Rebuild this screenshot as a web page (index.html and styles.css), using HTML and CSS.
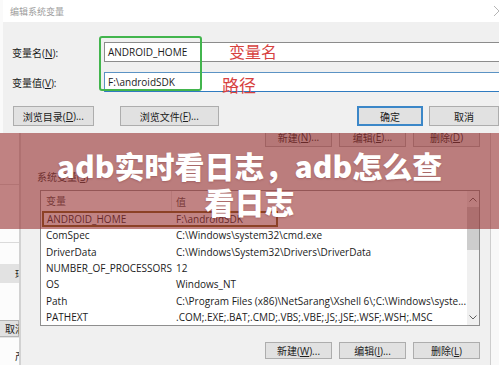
FILE: index.html
```html
<!DOCTYPE html>
<html lang="zh-CN">
<head>
<meta charset="utf-8">
<title>adb实时看日志</title>
<link rel="stylesheet" href="styles.css">
</head>
<body>
<div class="page">
  <section class="edit-dlg">
    <div class="titlebar">
      <span class="title">编辑系统变量</span>
      <svg class="close" width="12" height="12" viewBox="0 0 12 12"><path d="M1 1 L11 11 M11 1 L1 11" stroke="#b5b5b5" stroke-width="1" fill="none"/></svg>
    </div>
    <div class="dlg-body">
      <div class="field"><span class="label">变量名(<u>N</u>):</span><div class="input">ANDROID_HOME</div></div>
      <div class="field"><span class="label">变量值(<u>V</u>):</span><div class="input focus">F:\androidSDK</div></div>
      <div class="btn-row">
        <span class="btn b-dir">浏览目录(<u>D</u>)...</span>
        <span class="btn b-file">浏览文件(<u>F</u>)...</span>
        <span class="btn b-ok">确定</span>
        <span class="btn b-cancel">取消</span>
      </div>
    </div>
    <div class="highlight"></div>
    <span class="note note-name">变量名</span>
    <span class="note note-path">路径</span>
  </section>

  <section class="env">
    <div class="side-win">
      <div class="sw-a"></div>
      <div class="sw-b"></div>
      <div class="sw-c"></div>
      <div class="sw-row">环</div>
      <div class="sw-d"></div>
      <div class="sw-btn">取消</div>
      <div class="sw-e">产</div>
    </div>
    <div class="side-sep"></div>
    <div class="env-dlg">
      <div class="btns user-btns">
        <span class="btn">新建(<u>N</u>)...</span>
        <span class="btn">编辑(<u>E</u>)...</span>
        <span class="btn">删除(<u>D</u>)</span>
      </div>
      <div class="sys-label">系统变量(<u>S</u>)</div>
      <div class="list">
        <div class="list-main">
          <div class="list-head"><span class="c1">变量</span><span class="c2">值</span></div>
          <div class="row sel"><span class="c1">ANDROID_HOME</span><span class="c2">F:\androidSDK</span></div>
          <div class="row"><span class="c1">ComSpec</span><span class="c2">C:\Windows\system32\cmd.exe</span></div>
          <div class="row"><span class="c1">DriverData</span><span class="c2">C:\Windows\System32\Drivers\DriverData</span></div>
          <div class="row"><span class="c1">NUMBER_OF_PROCESSORS</span><span class="c2">12</span></div>
          <div class="row"><span class="c1">OS</span><span class="c2">Windows_NT</span></div>
          <div class="row"><span class="c1">Path</span><span class="c2">C:\Program Files (x86)\NetSarang\Xshell 6\;C:\Windows\syste...</span></div>
          <div class="row"><span class="c1">PATHEXT</span><span class="c2">.COM;.EXE;.BAT;.CMD;.VBS;.VBE;.JS;.JSE;.WSF;.WSH;.MSC</span></div>
        </div>
        <div class="scroll">
          <div class="arr"><svg width="8" height="5" viewBox="0 0 8 5"><path d="M0.5 4.5 L4 1 L7.5 4.5" stroke="#606060" fill="none" stroke-width="1"/></svg></div>
          <div class="thumb"></div>
          <div class="track"></div>
          <div class="arr"><svg width="8" height="5" viewBox="0 0 8 5"><path d="M0.5 0.5 L4 4 L7.5 0.5" stroke="#606060" fill="none" stroke-width="1"/></svg></div>
        </div>
      </div>
      <div class="btns sys-btns">
        <span class="btn">新建(<u>W</u>)...</span>
        <span class="btn">编辑(<u>I</u>)...</span>
        <span class="btn">删除(<u>L</u>)</span>
      </div>
    </div>
    <div class="right-strip"></div>
  </section>

  <div class="band">
    <h1 class="headline">adb实时看日志，adb怎么查<br>看日志</h1>
  </div>
</div>
</body>
</html>
```
FILE: styles.css
```css
* { box-sizing: border-box; margin: 0; padding: 0; }
html, body { width: 499px; height: 365px; overflow: hidden; background: #f0f0f0; }
body {
  font-family: "Open Sans", "Noto Sans CJK SC", sans-serif;
  font-size: 10px;
  color: #1b1b1b;
}
u { text-decoration: underline; text-underline-offset: 1px; }
.page { position: relative; width: 499px; height: 365px; overflow: hidden; }

/* top dialog */
.edit-dlg {
  position: relative;
  height: 133px;
  background: #f0f0f0;
  border-left: 3px solid #fafafa;
  overflow: hidden;
  display: flex;
  flex-direction: column;
}
.titlebar {
  height: 22px;
  background: #ffffff;
  display: flex;
  align-items: center;
  justify-content: space-between;
  padding-left: 7px;
}
.title { font-size: 9px; color: #9d9d9d; font-family: "Noto Sans CJK SC", sans-serif; }
.close { margin-right: -6px; margin-top: -1px; }
.dlg-body { flex: 1; padding: 20px 0 0 9px; display: flex; flex-direction: column; }
.field { display: flex; align-items: center; height: 20px; margin-bottom: 10px; }
.label { width: 92px; flex: none; color: #1b1b1b; }
.input {
  flex: 1;
  height: 20px;
  margin-right: -4px;
  background: #ffffff;
  border: 1px solid #8c8c8c;
  padding-left: 3px;
  line-height: 18px;
  font-size: 10px;
}
.input.focus { border-color: #5b93c4; border-bottom-color: #2f7bc0; }
.btn-row { display: flex; margin-top: 4px; height: 20px; }
.btn {
  display: flex;
  align-items: center;
  justify-content: center;
  background: #e1e1e1;
  border: 1px solid #adadad;
  color: #202020;
  font-size: 10px;
  white-space: nowrap;
}
.b-dir { width: 82px; margin-left: 1px; }
.b-file { width: 101px; margin-left: 26px; }
.b-ok { width: 67px; margin-left: 138px; border: 2px solid #3b87c8; }
.b-cancel { width: 70px; margin-left: 6px; flex: none; }

.highlight {
  position: absolute;
  left: 96px; top: 36px;
  width: 103px; height: 55px;
  border: 2px solid #42b54d;
  border-radius: 3px;
}
.note {
  position: absolute;
  font-family: "Noto Sans CJK SC", sans-serif;
  color: #d7423f;
  line-height: 1;
}
.note-name { left: 226px; top: 43px; font-size: 16px; }
.note-path { left: 219px; top: 76px; font-size: 17px; }

/* environment dialog behind */
.env { display: flex; height: 232px; }
.side-win {
  width: 19px;
  flex: none;
  background: #fcfcfc;
  display: flex;
  flex-direction: column;
  overflow: hidden;
  font-family: "Noto Sans CJK SC", sans-serif;
  white-space: nowrap;
}
.sw-a { height: 52px; border-bottom: 1px solid #dadada; }
.sw-b { height: 58px; border-bottom: 1px solid #dadada; }
.sw-c { height: 21px; }
.sw-row { height: 19px; background: #e2e2e2; padding-left: 15px; line-height: 19px; }
.sw-d { height: 37px; }
.sw-btn { height: 17px; background: #e1e1e1; border: 1px solid #b5b5b5; border-left: none; padding-left: 5px; line-height: 15px; }
.sw-e { flex: 1; padding-left: 15px; padding-top: 10px; border-top: 1px solid #e4e4e4; }
.side-sep { width: 2px; flex: none; background: #d2d2d2; }
.env-dlg {
  flex: 1;
  background: #f0f0f0;
  display: flex;
  flex-direction: column;
  overflow: hidden;
  padding: 0 10px 0 19px;
}
.right-strip { width: 9px; flex: none; border-left: 1px solid #cdcdcd; background: #f8f8f8; }

.btns { display: flex; justify-content: flex-end; gap: 7px; }
.btns .btn { width: 67px; }
.user-btns { height: 20px; margin-top: -6px; }
.sys-btns { height: 17px; margin-top: 16px; }

.sys-label { margin-top: 23px; margin-left: -3px; height: 14px; line-height: 14px; color: #333; }
.list {
  margin-top: 6px;
  height: 136px;
  background: #ffffff;
  border: 1px solid #8e8e8e;
  display: flex;
}
.list-main { flex: 1; display: flex; flex-direction: column; overflow: hidden; }
.list-head { height: 20px; display: flex; align-items: center; color: #4b4b4b; }
.list-head .c1 { border-right: 1px solid #e3e3e3; height: 20px; line-height: 20px; }
.c1 { width: 131px; flex: none; padding-left: 5px; white-space: nowrap; }
.c2 { padding-left: 4px; white-space: nowrap; }
.row { height: 16.3px; display: flex; align-items: center; line-height: 16px; }
.row.sel {
  width: 236px;
  margin-left: 1px;
  border: 2px solid #7a5a18;
}
.row.sel .c1 { width: 128px; padding-left: 3px; }
.scroll { width: 12px; flex: none; background: #f0f0f0; display: flex; flex-direction: column; }
.arr { height: 16px; display: flex; align-items: center; justify-content: center; }
.thumb { height: 43px; background: #cdcdcd; }
.track { flex: 1; }

/* overlay band */
.band {
  position: absolute;
  left: 0; top: 133px;
  width: 499px; height: 96px;
  background: rgba(152, 48, 48, 0.6);
}
.headline {
  font-family: "Noto Sans CJK SC", sans-serif;
  font-weight: 900;
  font-size: 30px;
  line-height: 36px;
  color: #ffffff;
  text-align: center;
  padding-top: 14px;
  text-shadow: 0 1px 2px rgba(90, 20, 20, 0.25);
}
```
